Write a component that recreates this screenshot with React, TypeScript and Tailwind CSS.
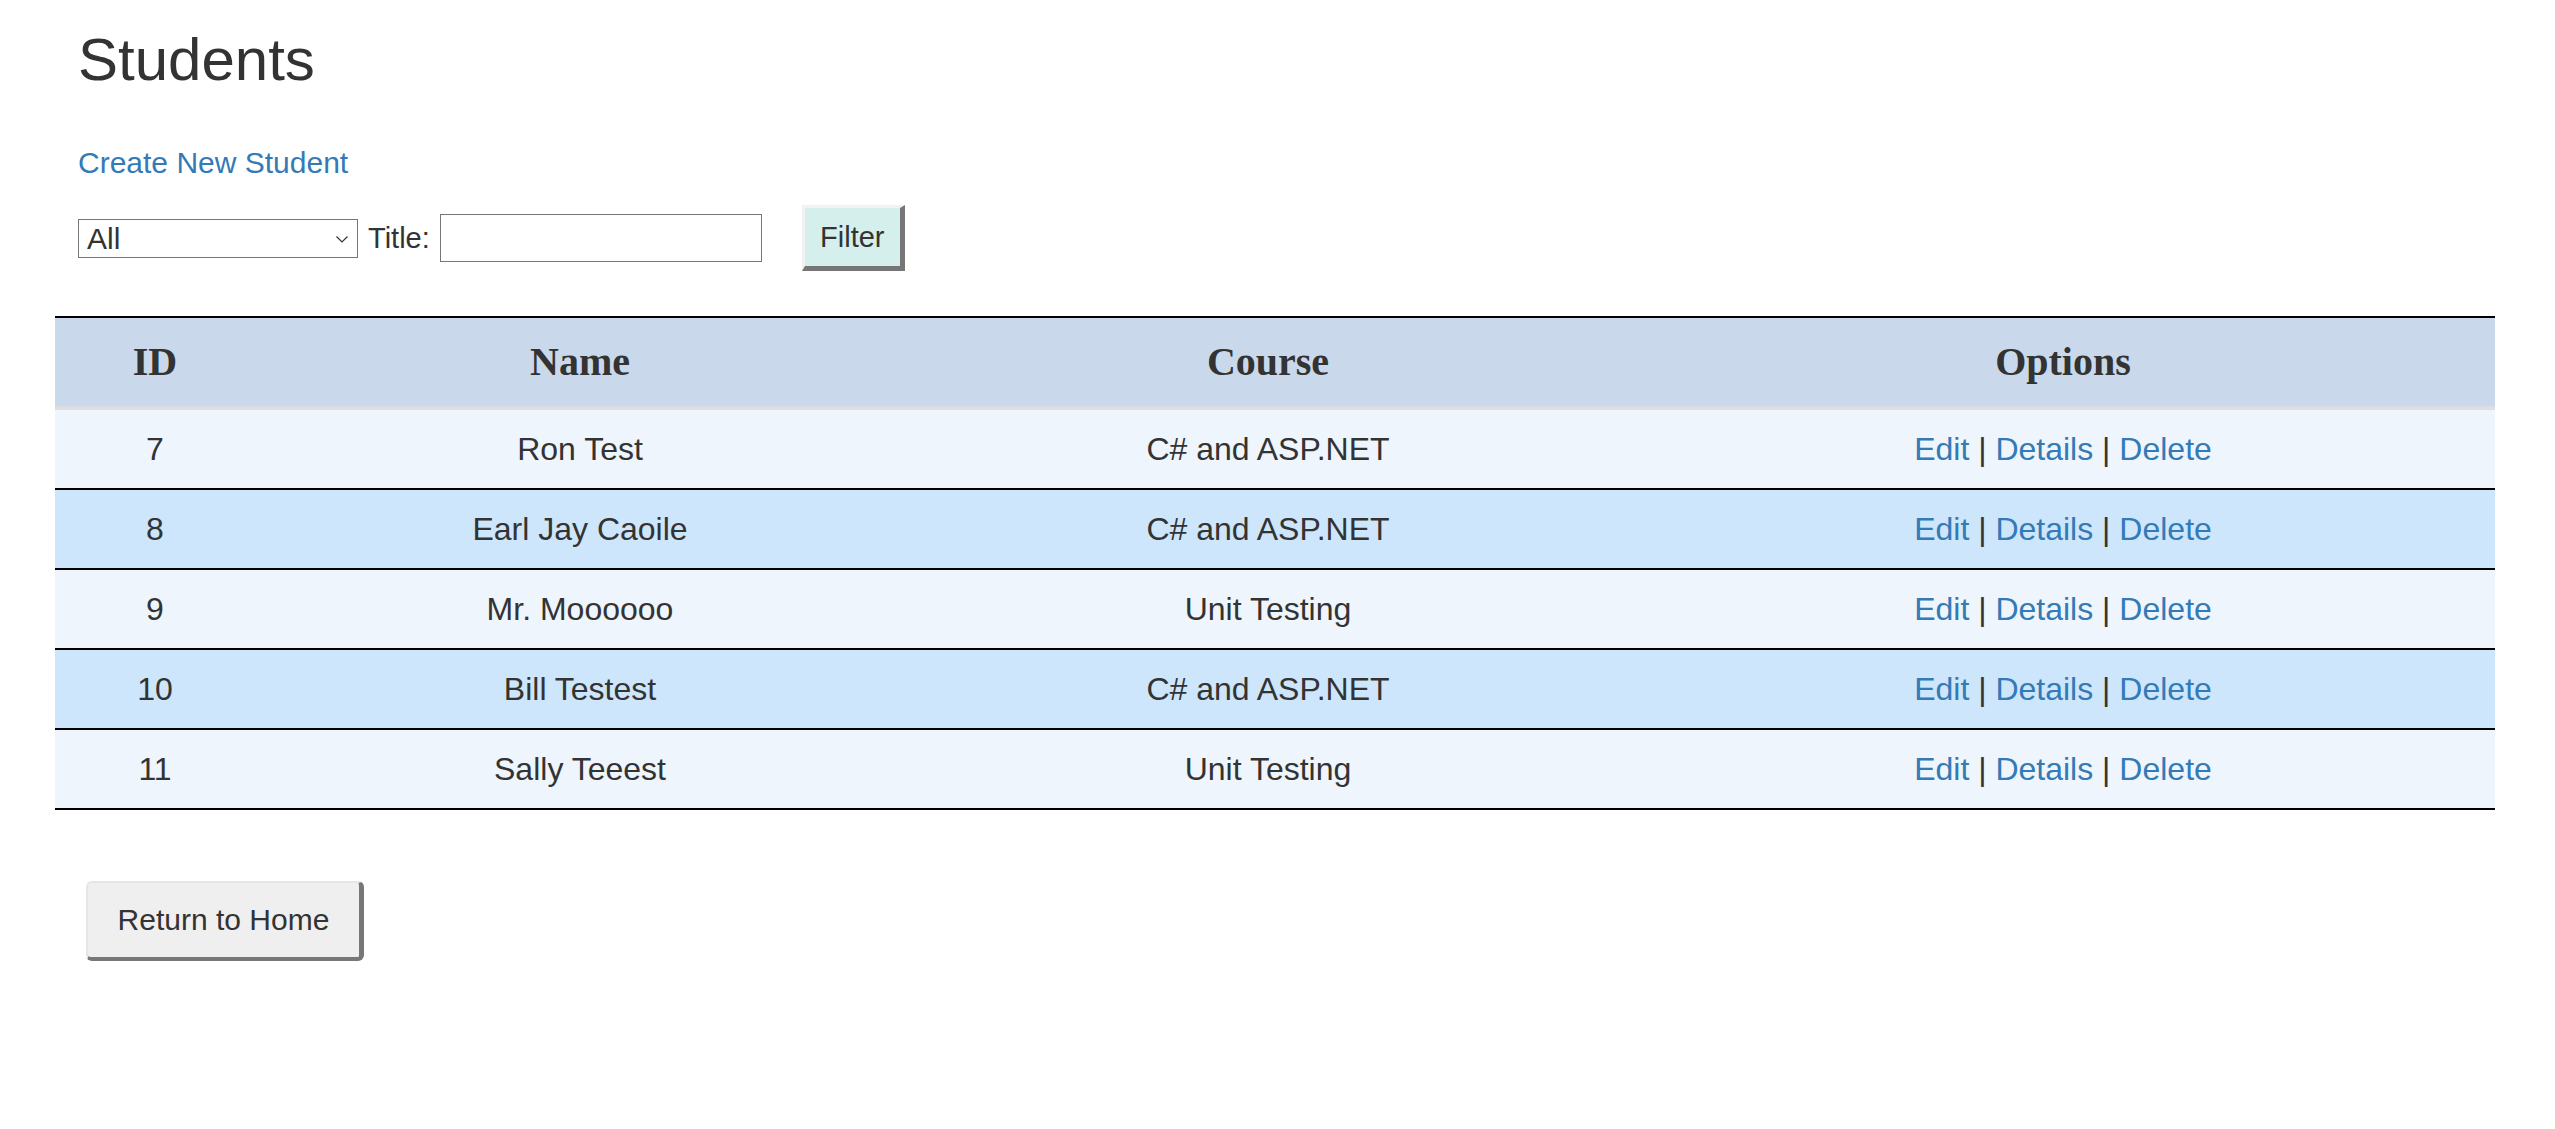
import React from "react";

type Row = { id: number; name: string; course: string };

const rows: Row[] = [
  { id: 7, name: "Ron Test", course: "C# and ASP.NET" },
  { id: 8, name: "Earl Jay Caoile", course: "C# and ASP.NET" },
  { id: 9, name: "Mr. Moooooo", course: "Unit Testing" },
  { id: 10, name: "Bill Testest", course: "C# and ASP.NET" },
  { id: 11, name: "Sally Teeest", course: "Unit Testing" },
];

export default function App() {
  return (
    <div className="min-h-screen bg-white font-['Liberation_Sans',Arial,sans-serif] text-[#333]">
      <div className="pl-[78px]">
        <h2 className="pt-[27px] text-[60px] leading-[65px] font-normal">Students</h2>
        <a href="#" className="mt-[49px] block w-fit text-[30px] leading-[43px] text-[#337ab7]">
          Create New Student
        </a>
        <div className="mt-[21px] flex h-[66px] items-center">
          <div className="relative h-[39px] w-[280px]">
            <select
              className="h-full w-full appearance-none border border-[#767676] bg-white pl-[8px] text-[30px] leading-[37px] text-[#333] outline-none"
              defaultValue="All"
            >
              <option>All</option>
            </select>
            <svg
              className="pointer-events-none absolute right-[10px] top-[17px]"
              width="12"
              height="7"
              viewBox="0 0 12 7"
              fill="none"
            >
              <path d="M0.5 0.5 L6 6 L11.5 0.5" stroke="#333" strokeWidth="1.2" />
            </svg>
          </div>
          <span className="ml-[10px] mr-[10px] text-[29px] leading-[40px]">Title:</span>
          <input
            type="text"
            className="h-[48px] w-[322px] border border-[#767676] bg-white outline-none"
          />
          <button className="ml-[40px] box-border h-[66px] w-[103px] border-t-[3px] border-l-[3px] border-r-[5px] border-b-[5px] border-t-[#f2f2f2] border-l-[#f2f2f2] border-r-[#767676] border-b-[#767676] bg-[#d4efec] text-[29px] leading-[40px] text-[#333]">
            Filter
          </button>
        </div>
      </div>

      <div className="mt-[45px] ml-[55px] w-[2440px] border-t-2 border-black">
        <div className="grid h-[88px] grid-cols-[200px_650px_726px_864px] items-center bg-[#c9d9eb] font-['Liberation_Serif','Times_New_Roman',serif] text-[40px] font-bold text-[#333]">
          <div className="text-center">ID</div>
          <div className="text-center">Name</div>
          <div className="text-center">Course</div>
          <div className="text-center">Options</div>
        </div>
        <div className="h-[4px] bg-[#dcdee2]" />
        {rows.map((r, i) => (
          <div
            key={r.id}
            className={
              "grid h-[80px] grid-cols-[200px_650px_726px_864px] items-center border-b-2 border-black text-[32px] " +
              (i % 2 === 0 ? "bg-[#eef5fd]" : "bg-[#cde6fb]")
            }
          >
            <div className="text-center">{r.id}</div>
            <div className="text-center">{r.name}</div>
            <div className="text-center">{r.course}</div>
            <div className="text-center">
              <a href="#" className="text-[#337ab7]">Edit</a> |{" "}
              <a href="#" className="text-[#337ab7]">Details</a> |{" "}
              <a href="#" className="text-[#337ab7]">Delete</a>
            </div>
          </div>
        ))}
      </div>

      <button className="ml-[86px] mt-[71px] box-border h-[80px] w-[278px] rounded-[6px] border-t-2 border-l-2 border-r-[5px] border-b-[4px] border-t-[#e6e6e6] border-l-[#e6e6e6] border-r-[#777] border-b-[#777] bg-[#efefef] text-[30px] leading-[40px] text-[#333]">
        Return to Home
      </button>
    </div>
  );
}
